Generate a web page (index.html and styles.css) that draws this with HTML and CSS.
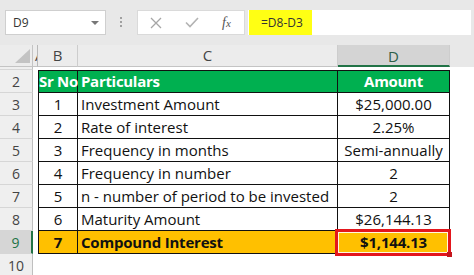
FILE: index.html
```html
<!DOCTYPE html>
<html>
<head>
<meta charset="utf-8">
<link rel="stylesheet" href="styles.css">
</head>
<body>
<div class="app">
  <div class="topbar">
    <div class="namebox"><span class="ref">D9</span><span class="caret"></span></div>
    <div class="dots"><i></i><i></i><i></i></div>
    <div class="fxbox">
      <svg class="ic-x" width="12" height="12" viewBox="0 0 12 12"><path d="M1 1 L11 11 M11 1 L1 11" stroke="#a6a6a6" stroke-width="1.3" fill="none"/></svg>
      <svg class="ic-check" width="14" height="11" viewBox="0 0 14 11"><path d="M1 5.5 L5 9.5 L13 1" stroke="#b3b3b3" stroke-width="1.6" fill="none"/></svg>
      <span class="fx">f<span class="fx-sub">x</span></span>
    </div>
    <div class="formula"><span class="formula-hl">=D8-D3</span></div>
  </div>
  <div class="sheet">
    <div class="corner"><svg width="33" height="22" viewBox="0 0 33 22"><polygon points="15,18 30,18 30,4" fill="#c3c3c3"/></svg></div>
    <div class="ch cha">A</div>
    <div class="ch">B</div>
    <div class="ch">C</div>
    <div class="ch ch-sel">D</div>
    <div class="ch-rest"></div>

    <div class="rh"></div>
    <div class="blank"></div>

    <div class="rh">2</div>
    <div class="gap"></div>
    <div class="t first top head center">Sr No</div>
    <div class="t top head">Particulars</div>
    <div class="t top head center">Amount</div>
    <div class="rest"></div>

    <div class="rh">3</div>
    <div class="gap"></div>
    <div class="t first center">1</div>
    <div class="t">Investment Amount</div>
    <div class="t center">$25,000.00</div>
    <div class="rest"></div>

    <div class="rh">4</div>
    <div class="gap"></div>
    <div class="t first center">2</div>
    <div class="t">Rate of interest</div>
    <div class="t center">2.25%</div>
    <div class="rest"></div>

    <div class="rh">5</div>
    <div class="gap"></div>
    <div class="t first center">3</div>
    <div class="t">Frequency in months</div>
    <div class="t center">Semi-annually</div>
    <div class="rest"></div>

    <div class="rh">6</div>
    <div class="gap"></div>
    <div class="t first center">4</div>
    <div class="t">Frequency in number</div>
    <div class="t center">2</div>
    <div class="rest"></div>

    <div class="rh">7</div>
    <div class="gap"></div>
    <div class="t first center">5</div>
    <div class="t">n - number of period to be invested</div>
    <div class="t center">2</div>
    <div class="rest"></div>

    <div class="rh">8</div>
    <div class="gap"></div>
    <div class="t first center">6</div>
    <div class="t">Maturity Amount</div>
    <div class="t center">$26,144.13</div>
    <div class="rest"></div>

    <div class="rh rh-sel">9</div>
    <div class="gap"></div>
    <div class="t first center total">7</div>
    <div class="t total">Compound Interest</div>
    <div class="t center total active">$1,144.13</div>
    <div class="rest"></div>

    <div class="rh">10</div>
    <div class="blank"></div>
  </div>
</div>
</body>
</html>
```

FILE: styles.css
```css
html, body {
  margin: 0;
  padding: 0;
  background: #ffffff;
}
.app {
  width: 474px;
  height: 275px;
  overflow: hidden;
  font-family: "Open Sans", "Liberation Sans", sans-serif;
}
.topbar {
  height: 45px;
  box-sizing: border-box;
  background: #e8e8e8;
  display: flex;
  align-items: flex-start;
  padding: 10px 0 0 5px;
}
.namebox {
  width: 101px;
  height: 25px;
  box-sizing: border-box;
  background: #fff;
  border: 1px solid #cfcfcf;
  display: flex;
  align-items: center;
  justify-content: space-between;
  padding: 0 6px 0 7px;
}
.ref {
  font-size: 12px;
  color: #333;
}
.caret {
  width: 0;
  height: 0;
  border-left: 4px solid transparent;
  border-right: 4px solid transparent;
  border-top: 4px solid #777;
}
.dots {
  margin: 7px 0 0 14px;
  width: 3px;
  display: flex;
  flex-direction: column;
  gap: 2px;
}
.dots i {
  display: block;
  width: 2px;
  height: 2px;
  background: #a0a0a0;
}
.fxbox {
  margin-left: 14px;
  width: 108px;
  height: 25px;
  box-sizing: border-box;
  background: #fff;
  border: 1px solid #dadada;
  display: flex;
  align-items: center;
  padding-left: 12px;
}
.ic-check {
  margin-left: 23px;
}
.fx {
  margin-left: 23px;
  font-family: "Liberation Serif", serif;
  font-style: italic;
  font-size: 14px;
  color: #555;
}
.fx-sub {
  font-size: 11px;
}
.formula {
  margin-left: 3px;
  width: 223px;
  height: 25px;
  background: #fff;
  display: flex;
}
.formula-hl {
  margin-left: 1px;
  width: 63px;
  height: 25px;
  box-sizing: border-box;
  background: #ffff14;
  padding-left: 12px;
  font-size: 12px;
  line-height: 25px;
  color: #333;
}
.sheet {
  display: grid;
  grid-template-columns: 33px 5px 40px 260px 112px 1fr;
  grid-template-rows: 22px 3px repeat(9, 23px);
}
.corner {
  background: #ececec;
  border-right: 1px solid #c4c4c4;
  border-bottom: 1px solid #c4c4c4;
  box-sizing: border-box;
  overflow: hidden;
}
.corner svg {
  display: block;
}
.ch {
  background: #ececec;
  border-right: 1px solid #cdcdcd;
  border-bottom: 1px solid #c4c4c4;
  box-sizing: border-box;
  font-size: 15px;
  line-height: 21px;
  text-align: center;
  color: #444;
  overflow: hidden;
  white-space: nowrap;
}
.cha {
  text-indent: 2px;
  text-align: left;
  border-right-color: #b8b8b8;
}
.ch-sel {
  background: #d4d4d4;
  border-bottom: 2px solid #217346;
  color: #2e5e48;
  line-height: 22px;
}
.ch-rest {
  background: #e8e8e8;
}
.rh {
  background: #efefef;
  border-right: 1px solid #bfbfbf;
  border-bottom: 1px solid #d6d6d6;
  box-sizing: border-box;
  font-size: 14px;
  line-height: 23px;
  text-align: center;
  color: #444;
}
.rh-sel {
  background: #d6d6d6;
  color: #217346;
  border-right: 2px solid #217346;
}
.blank {
  grid-column: span 5;
}
.gap, .rest {
  background: #fff;
}
.t {
  box-sizing: border-box;
  border-right: 1px solid #111;
  border-bottom: 1px solid #111;
  font-size: 15px;
  line-height: 22px;
  color: #111;
  padding-left: 3px;
  white-space: nowrap;
}
.t.first {
  border-left: 1px solid #111;
  padding-left: 0;
}
.t.top {
  border-top: 1px solid #111;
  line-height: 21px;
}
.center {
  text-align: center;
  padding-left: 0;
}
.head {
  background: #00b050;
  color: #fff;
  font-weight: 700;
  letter-spacing: -0.3px;
}
.total {
  background: #ffc000;
  font-weight: 700;
  letter-spacing: -0.2px;
}
.active {
  position: relative;
}
.active::after {
  content: "";
  position: absolute;
  top: -2px;
  left: -3px;
  right: -2px;
  bottom: -3px;
  border: 3px solid #e3161d;
  box-shadow: inset 0 0 0 1px #fff7e0;
}
.active::before {
  content: "";
  position: absolute;
  right: -3px;
  bottom: -4px;
  width: 5px;
  height: 5px;
  background: #c4161c;
  z-index: 1;
}
```
